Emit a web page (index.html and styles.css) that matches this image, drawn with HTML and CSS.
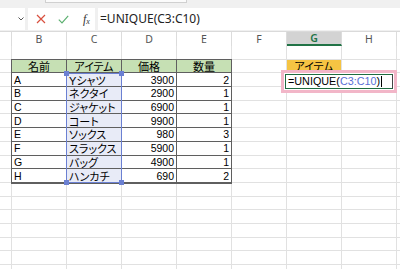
FILE: index.html
```html
<!DOCTYPE html>
<html lang="ja">
<head>
    <meta charset="UTF-8">
    <title>UNIQUE</title>
    <link rel="stylesheet" href="styles.css">
</head>
<body>
    <div class="ribbon"><div class="ribbon-box"></div></div>

    <div class="fbar">
        <div class="namebox">
            <svg class="chev" width="6" height="4" viewBox="0 0 6 4"><path d="M0.5 0.5 L3 3 L5.5 0.5" fill="none" stroke="#555" stroke-width="1"/></svg>
        </div>
        <div class="fbtns">
            <svg width="10" height="10" viewBox="0 0 10 10"><path d="M1 1 L9 9 M9 1 L1 9" stroke="#d9503f" stroke-width="1.2" fill="none"/></svg>
            <svg width="11" height="9" viewBox="0 0 11 9"><path d="M0.8 4.6 L4 7.8 L10.2 0.8" stroke="#5cb070" stroke-width="1.2" fill="none"/></svg>
            <span class="fx"><i>f</i><sub>x</sub></span>
        </div>
        <div class="finput">=UNIQUE(C3:C10)</div>
    </div>

    <div class="sheet">
        <div class="colhead">
            <div class="ch a"></div>
            <div class="ch">B</div>
            <div class="ch">C</div>
            <div class="ch">D</div>
            <div class="ch">E</div>
            <div class="ch">F</div>
            <div class="ch on">G</div>
            <div class="ch">H</div>
            <div class="ch rest"></div>
        </div>

        <div class="row"></div>
        <div class="row head">
            <div class="sp"></div>
            <div class="t th first">名前</div>
            <div class="t th">アイテム</div>
            <div class="t th">価格</div>
            <div class="t th">数量</div>
            <div class="blank"></div>
            <div class="gold">アイテム</div>
        </div>
        <div class="row">
            <div class="sp"></div>
            <div class="t first">A</div><div class="t sel">Yシャツ</div><div class="t num">3900</div><div class="t num">2</div>
        </div>
        <div class="row">
            <div class="sp"></div>
            <div class="t first">B</div><div class="t sel">ネクタイ</div><div class="t num">2900</div><div class="t num">1</div>
        </div>
        <div class="row">
            <div class="sp"></div>
            <div class="t first">C</div><div class="t sel">ジャケット</div><div class="t num">6900</div><div class="t num">1</div>
        </div>
        <div class="row">
            <div class="sp"></div>
            <div class="t first">D</div><div class="t sel">コート</div><div class="t num">9900</div><div class="t num">1</div>
        </div>
        <div class="row">
            <div class="sp"></div>
            <div class="t first">E</div><div class="t sel">ソックス</div><div class="t num">980</div><div class="t num">3</div>
        </div>
        <div class="row">
            <div class="sp"></div>
            <div class="t first">F</div><div class="t sel">スラックス</div><div class="t num">5900</div><div class="t num">1</div>
        </div>
        <div class="row">
            <div class="sp"></div>
            <div class="t first">G</div><div class="t sel">バッグ</div><div class="t num">4900</div><div class="t num">1</div>
        </div>
        <div class="row last">
            <div class="sp"></div>
            <div class="t first">H</div><div class="t sel">ハンカチ</div><div class="t num">690</div><div class="t num">2</div>
        </div>
        <div class="row"></div>
        <div class="row"></div>
        <div class="row"></div>
        <div class="row"></div>
        <div class="row"></div>
        <div class="row"></div>
        <div class="row"></div>

        <!-- reference range C3:C10 -->
        <div class="rng">
            <i class="hd tl"></i><i class="hd tr"></i><i class="hd bl"></i><i class="hd br"></i>
        </div>

        <!-- cell G3 in edit mode -->
        <div class="edit">
            <div class="editcell">=UNIQUE(<span class="ref">C3:C10</span>)<span class="caret"></span></div>
        </div>
    </div>
</body>
</html>
```

FILE: styles.css
```css
body {
    margin: 0;
    width: 400px;
    height: 269px;
    overflow: hidden;
    background: #fff;
    font-family: "Liberation Sans", "Noto Sans CJK JP", sans-serif;
    color: #000;
}

.ribbon {
    height: 8px;
    background: #f0f0f0;
}

.ribbon-box {
    margin-left: 45px;
    width: 140px;
    height: 2px;
    background: #fbfbfb;
    border: 1px solid #d0d0d0;
    border-top: none;
}

/* formula bar */
.fbar {
    height: 22px;
    display: flex;
    gap: 3px;
    background: #f0f0f0;
    border-bottom: 1px solid #dadada;
    padding-bottom: 1px;
}

.namebox {
    width: 25px;
    background: #fff;
    display: flex;
    align-items: center;
    justify-content: flex-end;
    padding-right: 1px;
    box-sizing: border-box;
}

.fbtns {
    width: 67px;
    background: #fff;
    display: flex;
    align-items: center;
    gap: 12px;
    padding-left: 8px;
    box-sizing: border-box;
}

.fx {
    font-family: "Liberation Serif", serif;
    font-size: 12px;
    color: #333;
    margin-left: 2px;
}

.fx sub {
    font-size: 8px;
    font-style: italic;
    vertical-align: -1px;
}

.finput {
    flex: 1;
    background: #fff;
    font-family: "Noto Sans", sans-serif;
    font-size: 12px;
    line-height: 22px;
    padding-left: 2px;
    color: #222;
}

/* sheet */
.sheet {
    position: relative;
}

.colhead {
    height: 14px;
    display: flex;
    font-family: "Noto Sans", sans-serif;
    font-size: 10.5px;
    color: #555;
}

.ch {
    width: 55px;
    flex: none;
    box-sizing: border-box;
    border-right: 1px solid #dcdcdc;
    text-align: center;
    line-height: 14px;
}

.ch.a { width: 12px; }
.ch.rest { width: auto; flex: 1; border: none; }

.ch.on {
    background: #d3d3d3;
    color: #217346;
    font-weight: 600;
    border-bottom: 2px solid #217346;
    line-height: 13px;
}

.row {
    height: 13.7px;
    display: flex;
    background-image:
        linear-gradient(to right, transparent 54px, #e1e1e1 54px),
        linear-gradient(to top, #e1e1e1 1px, transparent 1px);
    background-size: 55px 100%, 100% 100%;
    background-position: 12px 0, 0 0;
    background-repeat: repeat-x, no-repeat;
    font-size: 10.5px;
}

.sp { width: 11px; flex: none; }

.t {
    width: 55px;
    flex: none;
    box-sizing: border-box;
    border-right: 1px solid #5f5f5f;
    border-bottom: 1px solid #5f5f5f;
    background: #fff;
    display: flex;
    align-items: center;
    padding: 0 2px 0 2px;
    white-space: nowrap;
    overflow: hidden;
    font-feature-settings: "palt";
}

.t.first {
    width: 56px;
    border-left: 1px solid #5f5f5f;
}

.head .t {
    background: #c6e0b4;
    justify-content: center;
    box-shadow: 0 -1px 0 #5f5f5f;
    font-size: 11px;
}

.t.sel {
    background: #e8ebf7;
    font-size: 11px;
}

.t.num {
    justify-content: flex-end;
    padding-right: 2px;
}

.last .t { box-shadow: 0 1px 0 #5f5f5f; }

.blank { width: 55px; flex: none; }

.gold {
    width: 55px;
    flex: none;
    box-sizing: border-box;
    border-right: 1px solid #e1e1e1;
    border-bottom: 1px solid #e1e1e1;
    background: #f5c443;
    display: flex;
    justify-content: center;
    align-items: center;
    font-size: 11px;
    font-feature-settings: "palt";
}

/* reference outline */
.rng {
    position: absolute;
    left: 66px;
    top: 41px;
    width: 56px;
    height: 110px;
    box-sizing: border-box;
    border: 1px solid #6b80d2;
}

.hd {
    position: absolute;
    width: 5px;
    height: 5px;
    background: #6b80d2;
}

.tl { left: -3px; top: -3px; }
.tr { right: -3px; top: -3px; }
.bl { left: -3px; bottom: -3px; }
.br { right: -3px; bottom: -3px; }

/* edit cell */
.edit {
    position: absolute;
    left: 281px;
    top: 38px;
    width: 116px;
    height: 23px;
    box-sizing: border-box;
    border: 3px solid #f2b6c8;
    background: #fff;
    padding: 1px;
}

.editcell {
    height: 100%;
    box-sizing: border-box;
    border: 1px solid #1f6b40;
    border-right-color: #444;
    font-size: 10.8px;
    line-height: 13px;
    padding-left: 2px;
    display: flex;
    align-items: center;
    white-space: nowrap;
}

.ref { color: #5a70d6; }

.caret {
    width: 1px;
    height: 11px;
    background: #000;
    margin-left: 1px;
}
```
